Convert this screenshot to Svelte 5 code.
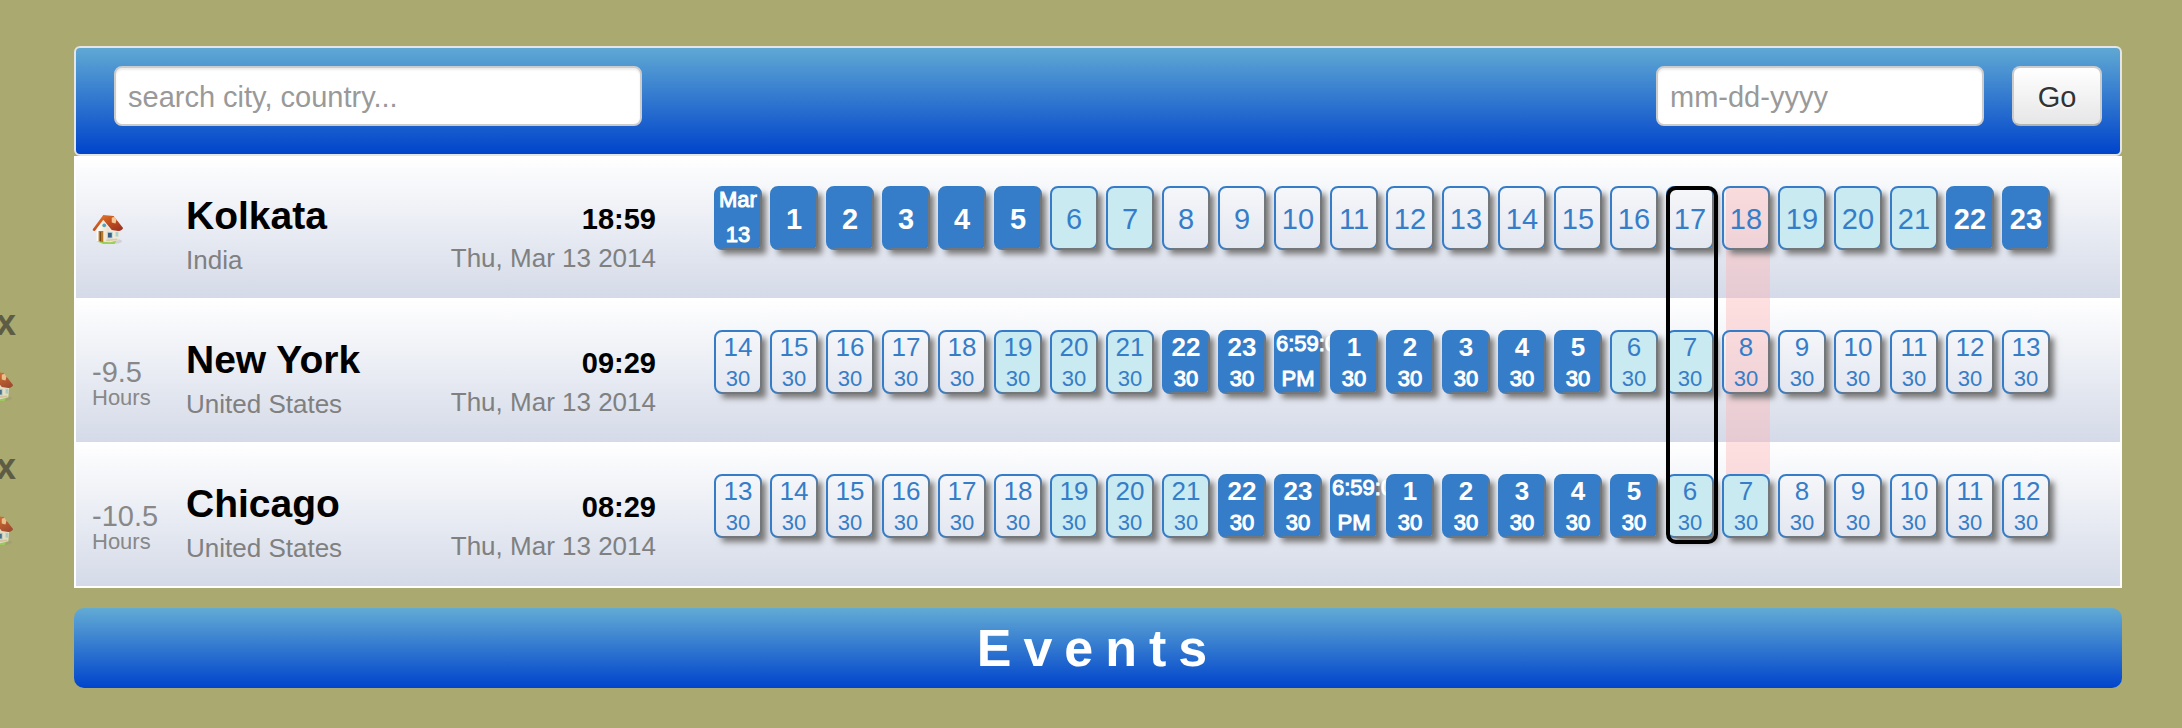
<script>
  const range = (from, to) => Array.from({ length: to - from + 1 }, (_, i) => from + i);
  const tone = (h) => (h < 6 || h > 21 ? 'night' : h < 8 || h > 18 ? 'edge' : 'day');
  const half = (hours) => hours.map((h) => ({ top: h, sub: '30', tone: tone(h) }));
  const midnight = { top: '6:59:00', sub: 'PM', tone: 'night', small: true };

  const cities = [
    {
      name: 'Kolkata', country: 'India', time: '18:59', home: true,
      cells: [
        { top: 'Mar', sub: '13', tone: 'night', small: true },
        ...range(1, 23).map((h) => ({ top: h, tone: tone(h) }))
      ]
    },
    {
      name: 'New York', country: 'United States', time: '09:29', offset: '-9.5',
      cells: [...half(range(14, 23)), midnight, ...half(range(1, 13))]
    },
    {
      name: 'Chicago', country: 'United States', time: '08:29', offset: '-10.5',
      cells: [...half(range(13, 23)), midnight, ...half(range(1, 12))]
    }
  ];
</script>

{#snippet house()}
  <svg class="house" viewBox="0 0 34 34" aria-hidden="true">
    <defs>
      <linearGradient id="roof" x1="0" y1="0" x2="1" y2="1">
        <stop offset="0" stop-color="#e8862c" />
        <stop offset="0.5" stop-color="#c4501e" />
        <stop offset="1" stop-color="#962c22" />
      </linearGradient>
      <linearGradient id="wall" x1="0" y1="0" x2="1" y2="0">
        <stop offset="0" stop-color="#fffdf6" />
        <stop offset="1" stop-color="#e9dfc8" />
      </linearGradient>
    </defs>
    <ellipse cx="21" cy="29" rx="11" ry="3" fill="#777" opacity="0.2" />
    <path d="M5 29 Q8 26 12 28 L26 28 L24 32 L12 32 Z" fill="#9bd05a" />
    <path d="M5 15 L11 6 L19 17 L19 30 L5 29 Z" fill="url(#wall)" />
    <path d="M18 15 L29 15 L28 28 L19 30 Z" fill="#f2ead6" />
    <path d="M12 1 L23 2 L33 15 Q32 18 28 18 L21 17 L12 6 L3 18 Q0 18 1 16 Z" fill="url(#roof)" />
    <path d="M21 4 L24 3 L26 6 L25 10 L21 9 Z" fill="#f5c797" />
    <circle cx="13" cy="12" r="2" fill="#54a4bb" />
    <path d="M7 18 h5 v12 l-5 -1 Z" fill="#b87827" />
    <path d="M9 19 v10" stroke="#784615" />
    <rect x="16" y="19" width="6" height="7" fill="#b9d3dc" />
    <rect x="17" y="20" width="4" height="5" fill="#385e88" />
    <path d="M15 28 L27 27" stroke="#dccba4" stroke-width="2" />
    <rect x="25" y="19" width="3" height="5" fill="#add4d0" />
  </svg>
{/snippet}

<main>
  <form class="toolbar" onsubmit={(e) => e.preventDefault()}>
    <input class="search" type="text" aria-label="Search city or country" placeholder="search city, country..." />
    <input class="date" type="text" aria-label="Date" placeholder="mm-dd-yyyy" />
    <button class="go" type="submit">Go</button>
  </form>

  <section class="zones">
    {#each cities as city}
      <article class="row">
        {#if !city.home}
          <div class="actions">
            <button class="remove" type="button">x</button>
            <button class="set-home" type="button" aria-label="Set as home">{@render house()}</button>
          </div>
        {/if}
        <div class="offset">
          {#if city.home}
            {@render house()}
          {:else}
            <span class="diff">{city.offset}</span>
            <span class="unit">Hours</span>
          {/if}
        </div>
        <div class="place">
          <h2>{city.name}</h2>
          <p>{city.country}</p>
        </div>
        <div class="clock">
          <strong>{city.time}</strong>
          <p>Thu, Mar 13 2014</p>
        </div>
        <ol class="hours">
          {#each city.cells as cell}
            <li class={cell.tone}>
              <span class="top" class:small={cell.small} class:single={!cell.sub}>{cell.top}</span>
              {#if cell.sub}<span class="sub">{cell.sub}</span>{/if}
            </li>
          {/each}
        </ol>
      </article>
    {/each}
    <div class="now"></div>
    <div class="picker"></div>
  </section>

  <h1>Events</h1>
</main>

<style>
  :global(body) {
    background: #aaa970;
    overflow: hidden;
  }
  main {
    padding: 46px 60px 40px 74px;
    font-family: 'Liberation Sans', Arial, sans-serif;
    font-size: 29px;
    color: #000;
  }
  input, button {
    box-sizing: border-box;
    font: inherit;
  }
  h1, h2, p, ol {
    margin: 0;
    padding: 0;
  }
  .toolbar {
    display: flex;
    align-items: flex-start;
    box-sizing: border-box;
    height: 110px;
    padding: 18px 18px 0 38px;
    border: 2px solid #e5e5e5;
    border-radius: 6px;
    background: linear-gradient(#5fa8d3, #0044cc);
  }
  .toolbar input, .go {
    height: 60px;
    border: 2px solid #ccc;
    border-radius: 8px;
  }
  .toolbar input {
    padding: 2px 12px 0;
    background: #fff;
    box-shadow: inset 0 2px 2px rgba(0, 0, 0, 0.075);
  }
  .toolbar input::placeholder {
    color: #999;
    opacity: 1;
  }
  .search {
    width: 528px;
    margin-right: auto;
  }
  .date {
    width: 328px;
    margin-right: 28px;
  }
  .go {
    width: 90px;
    padding: 2px 0 0;
    border-bottom-color: #b3b3b3;
    background: linear-gradient(#fff, #e6e6e6);
    color: #333;
    text-shadow: 0 2px 2px rgba(255, 255, 255, 0.75);
  }
  .zones {
    position: relative;
    border: 2px solid #fff;
    border-top: 0;
  }
  .row {
    position: relative;
    display: flex;
    box-sizing: border-box;
    height: 144px;
    padding: 32px 0 0 16px;
    background: linear-gradient(#fff, #d4dae8);
  }
  .row:first-child {
    height: 142px;
    padding-top: 30px;
  }
  .offset {
    width: 94px;
    padding-top: 28px;
    color: #888;
  }
  .house {
    display: block;
    width: 32px;
    height: 32px;
  }
  .diff, .unit {
    display: block;
  }
  .diff {
    line-height: 28px;
  }
  .unit {
    font-size: 22px;
    line-height: 24px;
  }
  .place {
    width: 234px;
    padding-top: 8px;
  }
  h2 {
    font-size: 39px;
    line-height: 44px;
  }
  p {
    font-size: 26px;
    line-height: 32px;
    color: #808080;
    white-space: nowrap;
  }
  .place p {
    padding-top: 6px;
  }
  .clock {
    width: 236px;
    padding-top: 16px;
    text-align: right;
  }
  .clock strong {
    display: block;
    line-height: 34px;
  }
  .clock p {
    padding-top: 6px;
  }
  .hours {
    display: flex;
    gap: 8px;
    margin-left: 58px;
    list-style: none;
  }
  .hours li {
    position: relative;
    z-index: 2;
    box-sizing: border-box;
    width: 48px;
    height: 64px;
    border: 2px solid #357dc8;
    border-radius: 8px;
    color: #357dc8;
    text-align: center;
    white-space: nowrap;
  }
  .hours li::after {
    content: '';
    position: absolute;
    inset: 0;
    box-shadow: 6px 6px 6px #777;
  }
  .hours .night {
    background: #357dc8;
    color: #fff;
    font-weight: bold;
  }
  .hours .edge {
    background: #c8eaf0;
  }
  .hours span {
    display: block;
  }
  .top {
    font-size: 26px;
    line-height: 30px;
  }
  .top.single {
    font-size: 29px;
    line-height: 62px;
  }
  .top.small, .sub {
    font-size: 22px;
  }
  .night .small, .night .sub {
    font-weight: normal;
    -webkit-text-stroke: 1px #fff;
  }
  .top.small {
    position: relative;
    z-index: 1;
    padding-bottom: 6px;
    line-height: 24px;
  }
  .sub {
    line-height: 34px;
  }
  .now {
    position: absolute;
    z-index: 1;
    top: 32px;
    right: 350px;
    bottom: 112px;
    width: 44px;
    background: rgba(255, 182, 182, 0.42);
  }
  .picker {
    position: absolute;
    z-index: 3;
    top: 30px;
    right: 402px;
    bottom: 42px;
    box-sizing: border-box;
    width: 52px;
    border: 4px solid #000;
    border-radius: 10px;
  }
  .actions {
    position: absolute;
    top: 5px;
    left: -94px;
    width: 34px;
  }
  .actions button {
    display: block;
    width: 34px;
    padding: 0;
    border: 0;
    background: none;
    opacity: 0.8;
  }
  .actions .remove {
    height: 40px;
    font-size: 36px;
    font-weight: bold;
    line-height: 36px;
    text-align: right;
    color: #4a4a3a;
  }
  .set-home {
    margin-top: 28px;
  }
  h1 {
    margin-top: 20px;
    border-radius: 10px;
    background: linear-gradient(#62abd4, #0044cc);
    color: #fff;
    font-size: 52px;
    line-height: 80px;
    letter-spacing: 12px;
    text-align: center;
  }
</style>
